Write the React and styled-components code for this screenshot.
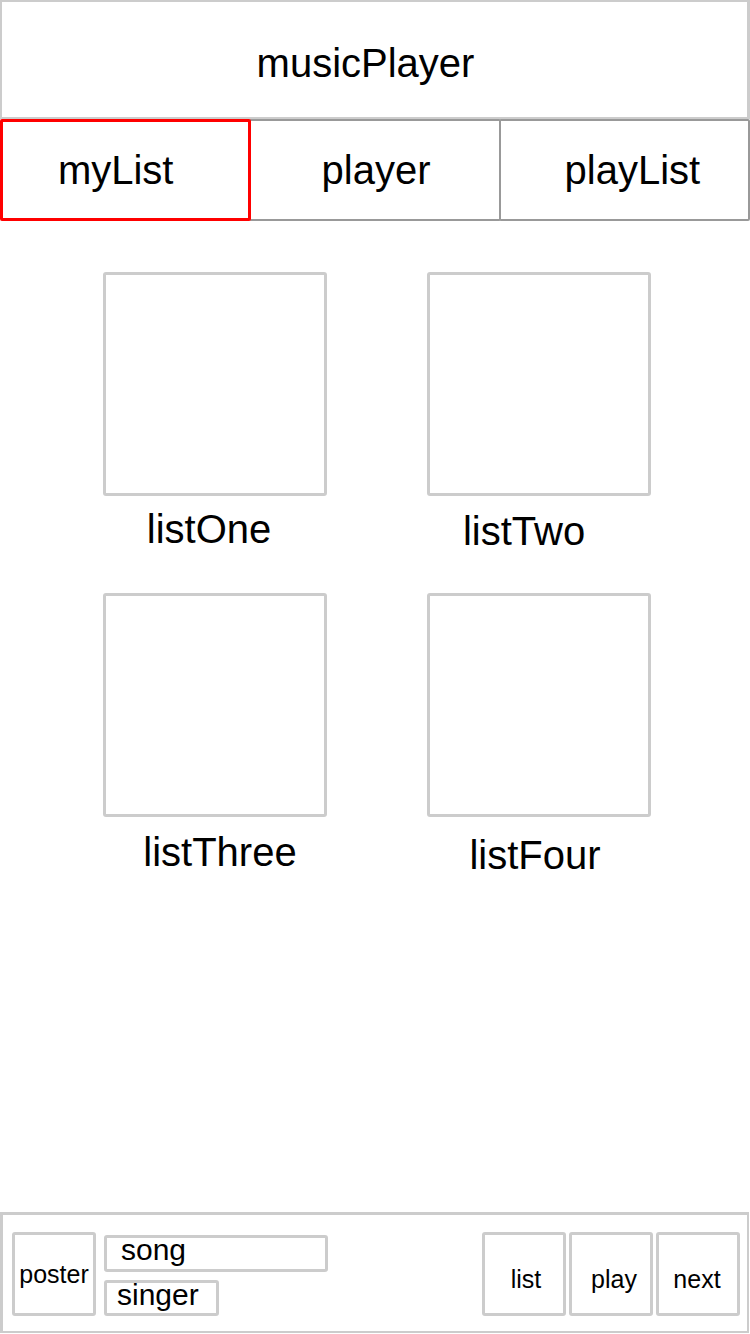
import React from 'react'
import styled, { createGlobalStyle } from 'styled-components'

const GlobalStyle = createGlobalStyle`
    html, body {
        margin: 0;
        padding: 0;
        background: #fff;
    }
    * {
        box-sizing: border-box;
    }
`

const Page = styled.div`
    display: flex;
    flex-direction: column;
    min-height: 100vh;
    font-family: "Liberation Sans", Arial, sans-serif;
    color: #000;
`

const Header = styled.div`
    height: 119px;
    border: 2px solid #ccc;
    border-right-width: 3px;
    display: flex;
    align-items: center;
    justify-content: center;
    padding: 8px 18px 0 0;
    font-size: 40px;
`

const Tabs = styled.div`
    display: flex;
    height: 102px;
`

const Tab = styled.div`
    flex: 0 0 calc((100% + 4px) / 3);
    display: flex;
    align-items: center;
    justify-content: center;
    padding-left: ${p => Math.max(p.offset, 0) * 2}px;
    padding-right: ${p => Math.max(-p.offset, 0) * 2}px;
    font-size: 40px;
    border: ${p => (p.active ? '3px solid #f00' : '2px solid #999')};
    border-radius: 2px;
    position: relative;
    z-index: ${p => (p.active ? 1 : 0)};
    & + & {
        margin-left: -2px;
    }
`

const Main = styled.div`
    flex: 1;
    padding: 51px 0 0 103px;
`

const Grid = styled.div`
    display: grid;
    grid-template-columns: repeat(2, 224px);
    column-gap: 100px;
    row-gap: 41px;
`

const Item = styled.div`
    display: flex;
    flex-direction: column;
    align-items: center;
`

const Cover = styled.div`
    width: 224px;
    height: 224px;
    border: 3px solid #ccc;
    border-radius: 3px;
`

const Label = styled.div`
    margin-top: 10px;
    font-size: 40px;
    line-height: 46px;
    transform: translate(${p => p.dx}px, ${p => p.dy}px);
`

const Footer = styled.div`
    height: 121px;
    margin: 0 1px 1px 0;
    border: 3px solid #ccc;
    border-right-width: 2px;
    border-bottom-width: 2px;
    display: flex;
    align-items: center;
    padding: 2px 7px 0 9px;
`

const Poster = styled.div`
    width: 84px;
    height: 84px;
    border: 3px solid #ccc;
    border-radius: 3px;
    display: flex;
    align-items: center;
    justify-content: center;
    font-size: 25px;
`

const Info = styled.div`
    display: flex;
    flex-direction: column;
    gap: 8px;
    margin: 2px 0 0 8px;
`

const Field = styled.div`
    width: ${p => p.width}px;
    height: ${p => p.height}px;
    border: 3px solid #ccc;
    border-radius: 3px;
    padding-left: ${p => p.indent}px;
    font-size: 30px;
    line-height: 24px;
`

const Controls = styled.div`
    margin-left: auto;
    display: flex;
    gap: 3px;
`

const Control = styled.div`
    width: 84px;
    height: 84px;
    border: 3px solid #ccc;
    border-radius: 3px;
    display: flex;
    align-items: center;
    justify-content: center;
    padding-top: 10px;
    padding-left: ${p => Math.max(p.offset, 0) * 2}px;
    padding-right: ${p => Math.max(-p.offset, 0) * 2}px;
    font-size: 25px;
`

const lists = [
    { id: 1, title: 'listOne', dx: -6, dy: 0 },
    { id: 2, title: 'listTwo', dx: -15, dy: 2 },
    { id: 3, title: 'listThree', dx: 5, dy: 2 },
    { id: 4, title: 'listFour', dx: -4, dy: 5 },
]

const tabs = [
    { name: 'myList', offset: -10 },
    { name: 'player', offset: 1 },
    { name: 'playList', offset: 8 },
]

const controls = [
    { name: 'list', offset: 2 },
    { name: 'play', offset: 3 },
    { name: 'next', offset: -1 },
]

const App = () => {
  return (
      <Page>
          <GlobalStyle />
          <Header>musicPlayer</Header>
          <Tabs>
            {tabs.map((t, i) => (
              <Tab key={t.name} active={i === 0} offset={t.offset}>{t.name}</Tab>
            ))}
          </Tabs>
          <Main>
            <Grid>
              {lists.map(item => (
                <Item key={item.id}>
                  <Cover />
                  <Label dx={item.dx} dy={item.dy}>{item.title}</Label>
                </Item>
              ))}
            </Grid>
          </Main>
          <Footer>
            <Poster>poster</Poster>
            <Info>
              <Field width={224} height={37} indent={14}>song</Field>
              <Field width={115} height={36} indent={10}>singer</Field>
            </Info>
            <Controls>
              {controls.map(c => (
                <Control key={c.name} offset={c.offset}>{c.name}</Control>
              ))}
            </Controls>
          </Footer>
      </Page>
  )
}

export default App
